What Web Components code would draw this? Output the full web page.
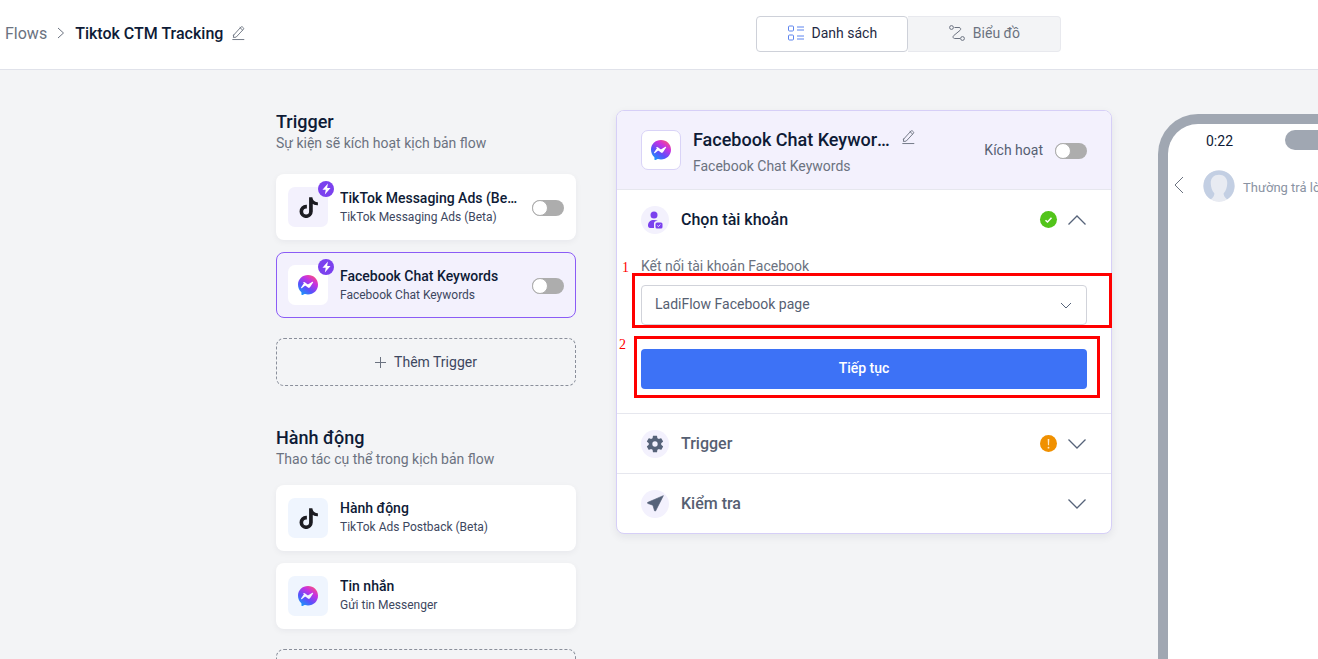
<!DOCTYPE html>
<html lang="vi">
<head>
<meta charset="utf-8">
<title>Tiktok CTM Tracking</title>
<style>
html,body{margin:0;padding:0;height:100%;overflow:hidden}
body{background:#f3f4f6;font-family:Roboto,"Liberation Sans",sans-serif;color:#0e1b36}
</style>
</head>
<body>
<flow-app></flow-app>

<script>
const TIKTOK = `<svg width="21" height="21" viewBox="0 0 16 16" fill="#1c1c22" stroke="#1c1c22" stroke-width="1.100"><path d="M9 .8h1.500c.144.715.54 1.617 1.235 2.512C12.500 4 13.500 4.500 14.600 4.500v1.300c-1.500 0-2.900-.7-3.900-1.700V11a4.500 4.500 0 1 1-4.500-4.500v1.700a2.800 2.800 0 1 0 2.800 2.800V.8Z"/></svg>`;
let gid = 0;
const MESSENGER = () => { const id = 'mg' + (++gid); return `<svg width="20" height="20" viewBox="0 0 16 16"><defs><linearGradient id="${id}" x1="0.15" y1="1" x2="0.85" y2="0"><stop offset="0" stop-color="#12a0f8"/><stop offset=".35" stop-color="#5a50fb"/><stop offset=".7" stop-color="#c931e0"/><stop offset="1" stop-color="#ff5470"/></linearGradient></defs><path fill="url(#${id})" d="M0 7.76C0 3.301 3.493 0 8 0s8 3.301 8 7.76-3.493 7.76-8 7.76c-.81 0-1.586-.107-2.316-.307a.639.639 0 0 0-.427.03l-1.588.702a.64.64 0 0 1-.898-.566l-.044-1.423a.639.639 0 0 0-.215-.456C.956 12.108 0 10.092 0 7.76zm4.808-1.46-2.35 3.727c-.225.358.214.761.551.506l2.525-1.916a.48.48 0 0 1 .578-.002l1.869 1.402a1.2 1.2 0 0 0 1.735-.32l2.35-3.728c.226-.357-.214-.761-.551-.506L8.19 7.38a.48.48 0 0 1-.578.002L5.743 5.98a1.2 1.2 0 0 0-1.735.32z"/></svg>`; };
const PENCIL = `<svg width="13" height="15" viewBox="0 0 14 15" fill="none" stroke="#6b7280" stroke-width="1" stroke-linejoin="round" stroke-linecap="round"><path d="M1.800 10.200 9.600 1.600c.5-.5 1.200-.5 1.700-.1l.9.8c.5.5.5 1.200.1 1.700L4.500 12.400l-3 .4.3-2.600Z" transform="translate(0 -1)"/><path d="M8.600 2.200 11.400 4.800" transform="translate(0 -1)"/><path d="M.8 14h12"/></svg>`;
const CHEV = d => `<svg width="20" height="12" viewBox="0 0 20 12" fill="none" stroke="#566379" stroke-width="1.3"><path d="${d==='up'?'M1.500 10.500 10 2l8.500 8.500':'M1.500 1.500 10 10l8.500-8.500'}"/></svg>`;

class Base extends HTMLElement{
  connectedCallback(){ if(!this.shadowRoot){this.attachShadow({mode:'open'});this.shadowRoot.innerHTML=this.render();} }
  a(n,d=''){return this.hasAttribute(n)?this.getAttribute(n):d;}
}

class UiToggle extends Base{ render(){return `<style>:host{display:inline-block;width:32px;height:16px;flex:none;margin-top:2px}
.t{box-sizing:border-box;width:32px;height:16px;border-radius:8px;background:#adadad;position:relative}
.k{position:absolute;left:0;top:0;width:16px;height:16px;box-sizing:border-box;border-radius:50%;background:#fff;border:1px solid #adadad}</style><div class="t"><div class="k"></div></div>`}}
customElements.define('ui-toggle',UiToggle);

class TopBar extends Base{ render(){return `<style>
:host{display:flex;box-sizing:border-box;height:70px;background:#fff;border-bottom:1px solid #e0e2ea;position:relative;align-items:center;padding-left:5px;flex:none}
.c{display:flex;align-items:center;font-size:16px;height:32px;margin-top:-3px}
.f{color:#6b7280}
.sep{margin:0 10px 0 10px;display:flex}
.n{font-weight:500;color:#0e1b36;letter-spacing:0}
.p{margin-left:9px;display:flex}
.seg{margin-left:511px;display:flex;height:36px;margin-top:-2px}
.b{box-sizing:border-box;display:flex;align-items:center;justify-content:center;gap:8px;font-size:14px;height:36px;padding-bottom:1px}
.on{width:152px;background:#fff;border:1px solid #ced1d9;border-radius:4px;color:#1f2a44}
.off{width:153px;background:#f3f4f6;border:1px solid #e8e9ee;border-left:0;border-radius:0 4px 4px 0;color:#6b7280}
</style>
<div class="c"><span class="f">Flows</span><span class="sep"><svg width="8" height="12" viewBox="0 0 8 12" fill="none" stroke="#6b7280" stroke-width="1"><path d="M1 1l5.500 5L1 11"/></svg></span><span class="n">Tiktok CTM Tracking</span><span class="p">${PENCIL}</span></div>
<div class="seg"><div class="b on"><svg width="16" height="16" viewBox="0 0 16 16" fill="none" stroke="#5d84ee" stroke-width="1"><rect x=".5" y="1" width="5" height="5" rx="1"/><rect x=".5" y="10" width="5" height="5" rx="1"/><path d="M9 2h7M9 5h7M9 11h7M9 14h7"/></svg>Danh sách</div>
<div class="b off"><svg width="16" height="16" viewBox="0 0 16 16" fill="none" stroke="#6b7280" stroke-width="1"><circle cx="2.500" cy="2.500" r="1.900"/><circle cx="13.500" cy="13.500" r="1.900"/><path d="M5.500 2.500H10c1.700 0 2.200 1.700 1.100 2.800L4.600 10.700c-1.100 1-.5 2.800 1 2.800H11"/></svg>Biểu đồ</div></div>`}}
customElements.define('top-bar',TopBar);

class FlowCard extends Base{ render(){
  const sel=this.hasAttribute('selected'), ic=this.a('icon'), tint=this.a('tint','#f3f1fd');
  return `<style>
:host{display:flex;box-sizing:border-box;height:66px;background:${sel?'#f3f1fd':'#fff'};border-radius:8px;align-items:center;padding:0 12px;gap:12px;${sel?'border:1px solid #8b5cf6;padding:0 11px;':'box-shadow:0 2px 6px rgba(20,25,50,.05);'}}
.i{position:relative;width:40px;height:40px;border-radius:7px;background:${sel?'#fff':tint};display:flex;align-items:center;justify-content:center;flex:none}
.b{position:absolute;right:-6px;top:-6px;width:16px;height:16px;border-radius:50%;background:#7b41ee;display:flex;align-items:center;justify-content:center}
.t{flex:1;min-width:0;line-height:1;${this.hasAttribute('toggle')?'':'padding-bottom:2px'}}
.h{font-size:14px;font-weight:500;color:#0e1b36;line-height:20px;white-space:nowrap;overflow:hidden;text-overflow:ellipsis;margin-top:-1px}
.s{font-size:12px;color:#3d4760;line-height:16px;margin-top:1px;white-space:nowrap}
</style>
<div class="i">${ic==='tiktok'?TIKTOK:MESSENGER()}${this.hasAttribute('bolt')?`<span class="b"><svg width="11" height="12" viewBox="0 0 10 11" fill="#fff"><path d="M6.300.4 1.300 6.200h3L3.500 10.600l5.200-6H5.600Z"/></svg></span>`:''}</div>
<div class="t"><div class="h">${this.a('title')}</div><div class="s">${this.a('sub')}</div></div>
${this.hasAttribute('toggle')?'<ui-toggle></ui-toggle>':''}`}}
customElements.define('flow-card',FlowCard);

class AddBtn extends Base{ render(){return `<style>
:host{display:flex;box-sizing:border-box;height:48px;border:1px dashed #8a8f9b;border-radius:8px;align-items:center;justify-content:center;gap:8px;font-size:14px;color:#3d4760;flex:none}
</style><svg width="11" height="11" viewBox="0 0 11 11" stroke="#6b7280" stroke-width="1"><path d="M5.500 0v11M0 5.500h11"/></svg><slot></slot>`}}
customElements.define('add-btn',AddBtn);

class SecHead extends Base{ render(){return `<style>
:host{display:block}
h2{margin:0;font-size:18px;font-weight:500;line-height:21px;color:#0e1b36}
p{margin:0;font-size:14px;line-height:16px;color:#6b7280;margin-top:3px}
</style><h2>${this.a('title')}</h2><p>${this.a('sub')}</p>`}}
customElements.define('sec-head',SecHead);

class LeftCol extends Base{ render(){return `<style>
:host{display:flex;flex-direction:column;width:300px;flex:none;padding-top:41px;box-sizing:content-box}
sec-head{margin-bottom:23px}
flow-card{margin-bottom:12px;flex:none}
add-btn{margin-top:8px}
.g{height:41px;flex:none}
</style>
<sec-head title="Trigger" sub="Sự kiện sẽ kích hoạt kịch bản flow"></sec-head>
<flow-card icon="tiktok" bolt toggle title="TikTok Messaging Ads (Beta)" sub="TikTok Messaging Ads (Beta)"></flow-card>
<flow-card icon="messenger" bolt toggle selected title="Facebook Chat Keywords" sub="Facebook Chat Keywords"></flow-card>
<add-btn>Thêm Trigger</add-btn>
<div class="g"></div>
<sec-head title="Hành động" sub="Thao tác cụ thể trong kịch bản flow" style="margin-bottom:18px"></sec-head>
<flow-card icon="tiktok" tint="#eff5fe" title="Hành động" sub="TikTok Ads Postback (Beta)"></flow-card>
<flow-card icon="messenger" tint="#eff5fe" title="Tin nhắn" sub="Gửi tin Messenger"></flow-card>
<add-btn>Thêm Hành động</add-btn>`}}
customElements.define('left-col',LeftCol);

class AccRow extends Base{ render(){
  const muted=this.hasAttribute('muted');
  return `<style>
:host{display:flex;box-sizing:border-box;height:60px;align-items:center;padding:0 24px;border-top:1px solid #e6e7ee}
.i{width:28px;height:28px;border-radius:50%;background:#f3f1fd;display:flex;align-items:center;justify-content:center;flex:none}
.t{flex:1;margin-left:12px;font-size:16px;font-weight:500;color:${muted?'#566072':'#0e1b36'}}
.s{display:flex;margin-right:10px}
.c{display:flex;width:20px;justify-content:center}
</style><span class="i"><slot name="icon"></slot></span><span class="t">${this.a('title')}</span><span class="s"><slot name="status"></slot></span><span class="c">${CHEV(this.a('chev','down'))}</span>`}}
customElements.define('acc-row',AccRow);

class StatusDot extends Base{ render(){
  const ok=this.a('kind')==='ok';
  return `<style>:host{display:flex;width:17px;height:17px;border-radius:50%;background:${ok?'#52c41a':'#f09000'};align-items:center;justify-content:center}</style>
  ${ok?'<svg width="9" height="8" viewBox="0 0 9 8" fill="none" stroke="#fff" stroke-width="1.500"><path d="M1.500 4.200 3.500 6 7.500 1.800"/></svg>':'<svg width="3" height="10" viewBox="0 0 3 11" fill="#ffe9c8"><path d="M.6 0h1.800L2.100 7H.9Z"/><circle cx="1.500" cy="9.500" r="1"/></svg>'}`}}
customElements.define('status-dot',StatusDot);

class FlowPanel extends Base{ render(){return `<style>
:host{display:block;width:496px;height:424px;box-sizing:border-box;border:1px solid #d6cff7;border-radius:8px;background:#fff;overflow:hidden;box-shadow:0 3px 8px rgba(20,25,50,.07);flex:none;margin-top:40px;margin-left:40px}
.hd{height:78px;background:#f3f1fd;display:flex;align-items:center;padding:0 24px;box-sizing:content-box}
.lg{width:38px;height:38px;border:1px solid #d9d3f7;border-radius:7px;background:#fff;display:flex;align-items:center;justify-content:center;flex:none}
.tt{margin-left:12px;flex:1;min-width:0;padding-top:2px}
.h{display:flex;align-items:center;font-size:18px;font-weight:500;color:#0e1b36;line-height:24px}
.h span{width:198px;white-space:nowrap;overflow:hidden;text-overflow:ellipsis}
.h i{display:flex;margin-left:11px;margin-top:-5px}
.sb{font-size:14px;color:#6b7280;line-height:16px;margin-top:6px}
.ka{display:flex;align-items:center;gap:12px;font-size:14px;color:#566072}
.body{padding:2px 24px 24px;height:164px;box-sizing:border-box}
label{display:block;font-size:14px;line-height:16px;color:#6b7280;height:16px;padding-top:7px;margin-bottom:11px}
.sel{box-sizing:border-box;height:40px;border:1px solid #d1d3da;border-radius:4px;display:flex;align-items:center;justify-content:space-between;padding:0 14px 2px 13px;font-size:14px;color:#566072}
.sel svg{margin-top:2px}
.btn{box-sizing:border-box;height:40px;margin-top:24px;padding-bottom:2px;background:#3d72f6;border-radius:4px;color:#fff;font-size:14px;font-weight:500;display:flex;align-items:center;justify-content:center}
</style>
<div class="hd"><div class="lg">${MESSENGER()}</div><div class="tt"><div class="h"><span>Facebook Chat Keywords</span><i>${PENCIL}</i></div><div class="sb">Facebook Chat Keywords</div></div><div class="ka">Kích hoạt<ui-toggle></ui-toggle></div></div>
<acc-row title="Chọn tài khoản" chev="up"><svg slot="icon" width="16" height="18" viewBox="0 0 16 18"><circle cx="7" cy="4" r="3.500" fill="#7b41ee"/><path fill="#7b41ee" d="M1 14.500C1 11 3.500 9 7 9c1.500 0 2.800.4 3.800 1H9.500C8 10 7 11 7 12.500V17H3c-1.200 0-2-1-2-2.500Z"/><rect x="8.500" y="11.500" width="7" height="6" rx="1.500" fill="#7b41ee"/><path d="M10.300 14.500l1.200 1 1.800-2" fill="none" stroke="#fff" stroke-width=".8"/></svg><status-dot slot="status" kind="ok"></status-dot></acc-row>
<div class="body"><label>Kết nối tài khoản Facebook</label><div class="sel">LadiFlow Facebook page<svg width="12" height="7" viewBox="0 0 12 7" fill="none" stroke="#566379" stroke-width="1"><path d="M1 1l5 5 5-5"/></svg></div><div class="btn">Tiếp tục</div></div>
<acc-row muted title="Trigger"><svg slot="icon" width="20" height="20" viewBox="0 0 24 24" fill="#566379"><path fill-rule="evenodd" d="M19.400 13c.04-.33.100-.66.100-1s-.05-.67-.1-1l2.100-1.650c.2-.15.25-.42.120-.64l-2-3.460c-.12-.22-.38-.3-.6-.22l-2.490 1c-.52-.4-1.080-.73-1.690-.98l-.38-2.650A.49.490 0 0 0 14 2h-4c-.25 0-.46.180-.49.420l-.38 2.650c-.61.250-1.170.59-1.690.98l-2.490-1c-.23-.09-.49 0-.61.220l-2 3.460c-.13.220-.07.490.120.640L4.570 11c-.04.330-.07.660-.07 1s.03.670.07 1l-2.110 1.650c-.19.150-.25.420-.12.640l2 3.460c.12.220.38.300.6.220l2.490-1c.52.400 1.080.730 1.690.980l.38 2.650c.03.240.24.420.49.420h4c.25 0 .46-.18.49-.420l.38-2.650c.61-.25 1.170-.59 1.690-.98l2.490 1c.23.090.49 0 .61-.22l2-3.460c.13-.22.070-.49-.12-.64L19.400 13ZM12 15.200a3.200 3.200 0 1 1 0-6.400 3.200 3.200 0 0 1 0 6.400Z"/></svg><status-dot slot="status" kind="warn"></status-dot></acc-row>
<acc-row muted title="Kiểm tra"><svg slot="icon" width="17" height="17" viewBox="0 0 16 16" fill="#566379" stroke="#566379" stroke-width=".6" stroke-linejoin="round"><path d="M15.400.6.800 6.900c-.5.2-.5.900.1 1.100l4.600 1.600L7.100 14.800c.2.500.9.500 1.100 0L15.400.6Z"/></svg></acc-row>`}}
customElements.define('flow-panel',FlowPanel);

class PhoneMock extends Base{ render(){return `<style>
:host{display:block;box-sizing:border-box;width:300px;height:700px;flex:none;margin-left:46px;margin-top:44px;border:10px solid #a0a7b2;border-bottom:0;border-radius:40px 40px 0 0;background:#fff;font-size:14px}
.st{display:flex;align-items:center;height:34px;padding-left:38px;gap:52px;color:#0e1b36}
.st b{font-weight:400}
.pill{width:160px;height:20px;border-radius:10px;background:#a0a7b2;margin-top:-2px}
.ch{display:flex;align-items:center;padding:12px 0 0 5px;color:#8a93a3;font-size:13px;white-space:nowrap}
.ch svg.b{margin-top:-2px}
.ch .x{margin-top:2px}
.av{width:32px;height:32px;border-radius:50%;margin-left:19px;margin-right:8px;overflow:hidden;flex:none;display:flex}
</style><div class="st"><b>0:22</b><div class="pill"></div></div>
<div class="ch"><svg class="b" width="11" height="18" viewBox="0 0 11 18" fill="none" stroke="#6b7280" stroke-width="1"><path d="M10 1 2 9l8 8"/></svg>
<span class="av"><svg width="32" height="32" viewBox="0 0 31 31"><circle cx="15.500" cy="15.500" r="15.500" fill="#e8ebf2"/><path fill="#c3cfe3" d="M15.500 .5C6 .5.500 7 .5 15.500c0 6 3 10.500 7 13 3-2.500 3.500-4 3.500-6-2-2-3.500-6-3.500-10 0-5 3-8 8-8s8 3 8 8c0 4-1.500 8-3.500 10 0 2 .5 3.500 3.500 6 4-2.500 7-7 7-13C30.500 7 25 .5 15.500.5Z"/></svg></span><span class="x">Thường trả lời ngay</span></div>`}}
customElements.define('phone-mock',PhoneMock);

class RedBox extends Base{ render(){return `<style>
:host{position:absolute;box-sizing:border-box;border:3px solid #f00}
span{position:absolute;font:14px/16px "Liberation Serif",serif;color:#f00}
</style><span style="${this.a('ls')}">${this.a('n')}</span>`}}
customElements.define('red-box',RedBox);

class FlowApp extends Base{ render(){return `<style>
:host{display:flex;flex-direction:column;height:659px;width:1318px;overflow:hidden;position:relative}
.m{display:flex;padding-left:276px;flex:none;height:589px;align-items:flex-start;overflow:hidden}
</style>
<top-bar></top-bar>
<div class="m"><left-col></left-col><flow-panel></flow-panel><phone-mock></phone-mock></div>
<red-box n="1" ls="left:-13px;top:-16px" style="left:632px;top:273px;width:480px;height:55px"></red-box>
<red-box n="2" ls="left:-18px;top:-2px" style="left:634px;top:336px;width:466px;height:62px"></red-box>`}}
customElements.define('flow-app',FlowApp);
</script>
</body>
</html>
